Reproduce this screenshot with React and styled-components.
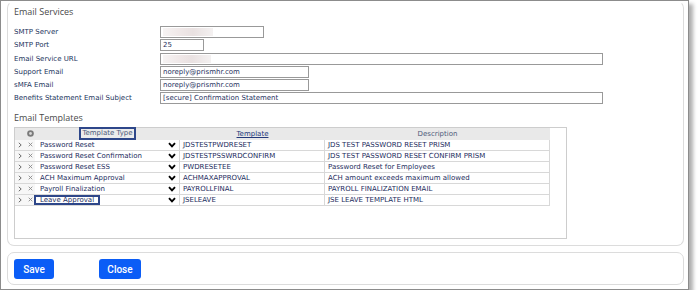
import React from "react";
import styled, { createGlobalStyle } from "styled-components";

const Global = createGlobalStyle`
  html, body { margin: 0; padding: 0; background: #fff; }
  * { box-sizing: border-box; }
`;

const Frame = styled.div`
  width: 689px;
  height: 290px;
  border: 1px solid #8c8c8c;
  box-shadow: 4px 4px 4px rgba(0, 0, 0, 0.32);
  background: #fff;
  padding: 0 4px 4px 6px;
  display: flex;
  flex-direction: column;
  gap: 6px;
  font-family: "DejaVu Sans", Verdana, sans-serif;
  font-size: 7px;
  color: #1f2f58;
`;

const Panel = styled.section`
  border: 1px solid #dcdcdc;
  border-top-color: ${(p) => (p.$open ? "transparent" : "#dcdcdc")};
  border-radius: 7px;
  height: ${(p) => p.$h}px;
  padding: ${(p) => p.$pad};
  display: flex;
  flex-direction: column;
  align-items: flex-start;
`;

const Heading = styled.h2`
  margin: ${(p) => p.$mt || 0}px 0 0 0;
  font-family: "Open Sans", sans-serif;
  font-weight: 400;
  font-size: 9px;
  line-height: 11px;
  color: #4a4a4a;
`;

const Form = styled.div`
  margin-top: 9px;
  display: grid;
  grid-template-columns: 146px auto;
  grid-auto-rows: 12px;
  row-gap: 1.3px;
  align-items: center;
`;

const Label = styled.div`
  line-height: 12px;
  color: #22345c;
`;

const Input = styled.div`
  position: relative;
  width: ${(p) => p.$w}px;
  height: 12px;
  border: 1px solid #999;
  padding: 0 2px;
  line-height: 10px;
  color: #1f325e;
  overflow: hidden;
  white-space: nowrap;
`;

const Redacted = styled.span`
  display: inline-block;
  width: ${(p) => p.$w}px;
  height: 8px;
  margin-top: 1px;
  background: linear-gradient(90deg, #f6f3f3, #eee6e6 40%, #e9e1e1 60%, #f4f1f1);
`;

const GridBox = styled.div`
  margin-top: 3.5px;
  width: 553px;
  height: 112px;
  border: 1px solid #cdcdcd;
`;

const Table = styled.div`
  width: 535px;
  display: grid;
  grid-template-columns: 10px 10px 145px 145px 225px;
`;

const HeadCell = styled.div`
  height: 12px;
  background: #e9e9e9;
  display: flex;
  align-items: center;
  justify-content: center;
  color: ${(p) => (p.$link ? "#23387a" : "#4d5a7a")};
  text-decoration: ${(p) => (p.$link ? "underline" : "none")};
  white-space: nowrap;
`;

const Marked = styled.span`
  border: 2px solid #2e478a;
  padding: 0 1px;
  line-height: 9px;
  background: #ececec;
`;

const Cell = styled.div`
  height: 11px;
  border-bottom: 1px solid #d8d8d8;
  border-right: ${(p) => (p.$sep ? "1px solid #d8d8d8" : "none")};
  background: ${(p) => (p.$muted ? "#f7f7f7" : "#fff")};
  display: flex;
  align-items: center;
  justify-content: ${(p) => (p.$center ? "center" : "flex-start")};
  padding-left: ${(p) => p.$pl ?? 0}px;
  padding-right: ${(p) => p.$pr ?? 0}px;
  line-height: 10px;
  white-space: nowrap;
  color: ${(p) => p.$color || "#1b2c5c"};
  font-size: ${(p) => p.$fs || 7}px;
`;

const TypeText = styled.span`
  flex: 1;
  display: flex;
  padding-left: ${(p) => (p.$flush ? 0 : 5)}px;
`;

const LeaveMark = styled.span`
  border: 2px solid #2e478a;
  margin-left: -1px;
  padding: 0 4px;
  height: 10px;
  display: inline-flex;
  align-items: center;
`;

const Btns = styled.div`
  display: flex;
  gap: 45px;
`;

const Button = styled.button`
  height: 20px;
  width: ${(p) => p.$w}px;
  border: none;
  border-radius: 3px;
  background: #0b5df6;
  color: #fff;
  font-family: Roboto, "Open Sans", sans-serif;
  font-size: 10px;
  font-weight: 500;
  padding: 0;
`;

const Chevron = () => (
  <svg width="8" height="6" viewBox="0 0 8 6">
    <path d="M1 1.2 L4 4.3 L7 1.2" fill="none" stroke="#000" strokeWidth="1.9" />
  </svg>
);

const Expand = () => (
  <svg width="4" height="6" viewBox="0 0 4 6">
    <path d="M0.8 0.8 L3.2 3 L0.8 5.2" fill="none" stroke="#6a6a6a" strokeWidth="1" />
  </svg>
);

const Remove = () => (
  <svg width="5" height="5" viewBox="0 0 5 5">
    <path d="M0.7 0.7 L4.3 4.3 M4.3 0.7 L0.7 4.3" fill="none" stroke="#8a8a8a" strokeWidth="0.9" />
  </svg>
);

const AddIcon = () => (
  <svg width="7" height="7" viewBox="0 0 7 7">
    <circle cx="3.5" cy="3.5" r="3.3" fill="#7a7a7a" />
    <circle cx="3.5" cy="3.5" r="1.4" fill="#d6d6d6" />
  </svg>
);

const rows = [
  ["Password Reset", "JDSTESTPWDRESET", "JDS TEST PASSWORD RESET PRISM"],
  ["Password Reset Confirmation", "JDSTESTPSSWRDCONFIRM", "JDS TEST PASSWORD RESET CONFIRM PRISM"],
  ["Password Reset ESS", "PWDRESETEE", "Password Reset for Employees"],
  ["ACH Maximum Approval", "ACHMAXAPPROVAL", "ACH amount exceeds maximum allowed"],
  ["Payroll Finalization", "PAYROLLFINAL", "PAYROLL FINALIZATION EMAIL"],
  ["Leave Approval", "JSELEAVE", "JSE LEAVE TEMPLATE HTML"],
];

export default function App() {
  return (
    <>
      <Global />
      <Frame>
        <Panel $open $h={245} $pad="4px 6px 6px 6px">
          <Heading>Email Services</Heading>
          <Form>
            <Label>SMTP Server</Label>
            <Input $w={104}><Redacted $w={50} /></Input>
            <Label>SMTP Port</Label>
            <Input $w={44}>25</Input>
            <Label>Email Service URL</Label>
            <Input $w={443}><Redacted $w={48} /></Input>
            <Label>Support Email</Label>
            <Input $w={149}>noreply@prismhr.com</Input>
            <Label>sMFA Email</Label>
            <Input $w={149}>noreply@prismhr.com</Input>
            <Label>Benefits Statement Email Subject</Label>
            <Input $w={443}>[secure] Confirmation Statement</Input>
          </Form>
          <Heading $mt={8}>Email Templates</Heading>
          <GridBox>
            <Table>
              <HeadCell />
              <HeadCell><AddIcon /></HeadCell>
              <HeadCell><Marked>Template Type</Marked></HeadCell>
              <HeadCell $link>Template</HeadCell>
              <HeadCell>Description</HeadCell>
              {rows.map(([type, tpl, desc], i) => (
                <React.Fragment key={tpl}>
                  <Cell $muted $center><Expand /></Cell>
                  <Cell $muted $center><Remove /></Cell>
                  <Cell $sep $pr={3}>
                    {i === rows.length - 1 ? (
                      <TypeText $flush>
                        <LeaveMark>{type}</LeaveMark>
                      </TypeText>
                    ) : (
                      <TypeText>{type}</TypeText>
                    )}
                    <Chevron />
                  </Cell>
                  <Cell $sep $pl={3}>{tpl}</Cell>
                  <Cell $sep $pl={3}>{desc}</Cell>
                </React.Fragment>
              ))}
            </Table>
          </GridBox>
        </Panel>
        <Panel $h={33} $pad="6px 6px 4px 6px">
          <Btns>
            <Button $w={40}>Save</Button>
            <Button $w={42}>Close</Button>
          </Btns>
        </Panel>
      </Frame>
    </>
  );
}
